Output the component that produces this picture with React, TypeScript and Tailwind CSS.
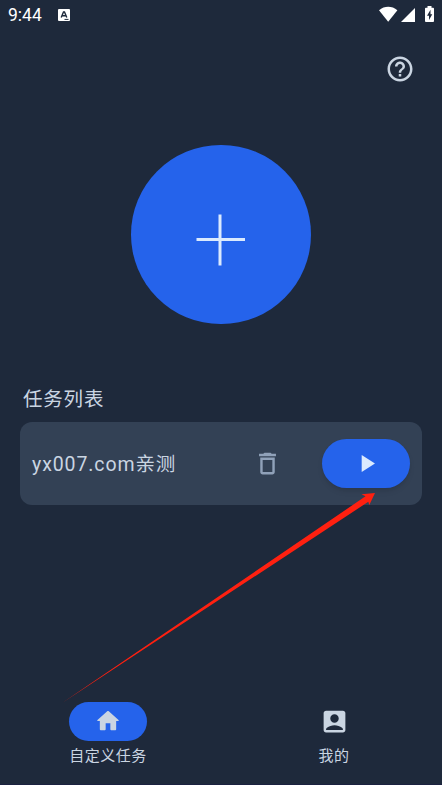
import { MdAccountBox, MdDeleteOutline, MdHelpOutline, MdPlayArrow } from 'react-icons/md';

function StatusBar() {
  return (
    <header className="flex h-[30px] items-center justify-between pl-[8px] pr-[7px] text-white">
      <div className="flex items-center gap-[15px]">
        <span className="w-[35px] whitespace-nowrap font-['Roboto',sans-serif] text-[17.5px] leading-[30px]">9:44</span>
        <svg className="size-[12px]" viewBox="0 0 12 12">
          <rect width="12" height="12" rx="1" fill="#fff" />
          <path d="M3.2 8.5 5.5 3h1l2.3 5.5M4.2 6.8h3.6" fill="none" stroke="#1e293b" strokeWidth="1.4" />
          <path d="M6.5 10.4h4" stroke="#1e293b" />
        </svg>
      </div>
      <svg className="h-[18px] w-[56px]" viewBox="0 0 56 18" fill="#fff">
        <path d="M0 4.2C5.6-.3 12.8-.3 18.4 4.2L9.2 15.8Z" />
        <path d="M22 16 36 2v14Z" />
        <path d="M48.5 0h4v1.8h1.6q.9 0 .9.9v12.4q0 .9-.9.9h-7.2q-.9 0-.9-.9V2.7q0-.9.9-.9h1.6Z" />
        <path d="M51.5 3.8 48 9.8h2v4.2l3.3-5.8h-1.8Z" fill="#1e293b" />
      </svg>
    </header>
  );
}

function HomeIcon() {
  return (
    <svg className="size-[28px]" viewBox="0 0 24 24" fill="currentColor">
      <path d="M10 19v-5h4v5c0 .55.45 1 1 1h3c.55 0 1-.45 1-1v-7h1.7c.46 0 .68-.57.33-.87L12.67 3.6c-.38-.34-.96-.34-1.34 0l-8.36 7.53c-.34.3-.13.87.33.87H5v7c0 .55.45 1 1 1h3c.55 0 1-.45 1-1z" />
    </svg>
  );
}

export default function App() {
  return (
    <div className="relative flex h-[785px] w-[442px] flex-col overflow-hidden border-b border-[#1b2140] bg-[#1e293b] font-['Roboto','Noto_Sans_CJK_SC',sans-serif] text-slate-300">
      <StatusBar />

      <div className="flex h-[114.5px] justify-end pr-[27px] pt-[24px]">
        <button className="size-[30px]" aria-label="帮助">
          <MdHelpOutline className="size-[30px]" />
        </button>
      </div>

      {/* 新建任务 */}
      <button className="mx-auto flex size-[179.5px] items-center justify-center rounded-full bg-[#2563eb]" aria-label="新建任务">
        <svg className="mt-[12px] h-[52px] w-[50px]" viewBox="0 0 50 52" fill="none" stroke="#dbeafe" strokeWidth="3">
          <path d="M.5 25.5H49M24 .5V51.5" />
        </svg>
      </button>

      <main className="mt-[61px] px-[20px]">
        <h2 className="pl-[3px] text-[19.5px] leading-[30px] tracking-[0.8px]">任务列表</h2>
        <div className="mt-[6.5px] flex h-[83.5px] items-center rounded-xl bg-[#334155] pl-[12px] pr-[12px]">
          <span className="w-[221px] whitespace-nowrap pt-[3px] text-[19.5px] tracking-[0.9px]">yx007.com亲测</span>
          <button aria-label="删除">
            <MdDeleteOutline className="size-[29px] text-slate-400" />
          </button>
          <button className="ml-auto flex h-[49px] w-[88px] items-center justify-center rounded-full bg-[#2563eb] shadow-md" aria-label="开始">
            <MdPlayArrow className="size-[29px] text-blue-100" />
          </button>
        </div>
      </main>

      <nav className="mt-auto flex h-[82.5px] w-full justify-between pl-[58px] pr-[58px] text-[15px] leading-[20px] tracking-[0.5px]">
        <div className="flex w-[100px] flex-col items-center">
          <span className="flex h-[39px] w-[78px] items-center justify-center rounded-full bg-[#2563eb]">
            <HomeIcon />
          </span>
          <span className="mt-[5.5px] whitespace-nowrap">自定义任务</span>
        </div>
        <div className="flex w-[100px] flex-col items-center">
          <span className="flex h-[39px] w-[78px] items-center justify-center">
            <MdAccountBox className="size-[29px]" />
          </span>
          <span className="mt-[5.5px] whitespace-nowrap">我的</span>
        </div>
      </nav>

      {/* 指向开始按钮的箭头 */}
      <svg className="pointer-events-none absolute inset-0 h-[785px] w-[442px]" viewBox="0 0 442 785">
        <path d="M62 703 365.5 496.3 361.5 494.3 375 493 369.3 505 368.3 501.8Z" fill="#ff2010" />
      </svg>
    </div>
  );
}
